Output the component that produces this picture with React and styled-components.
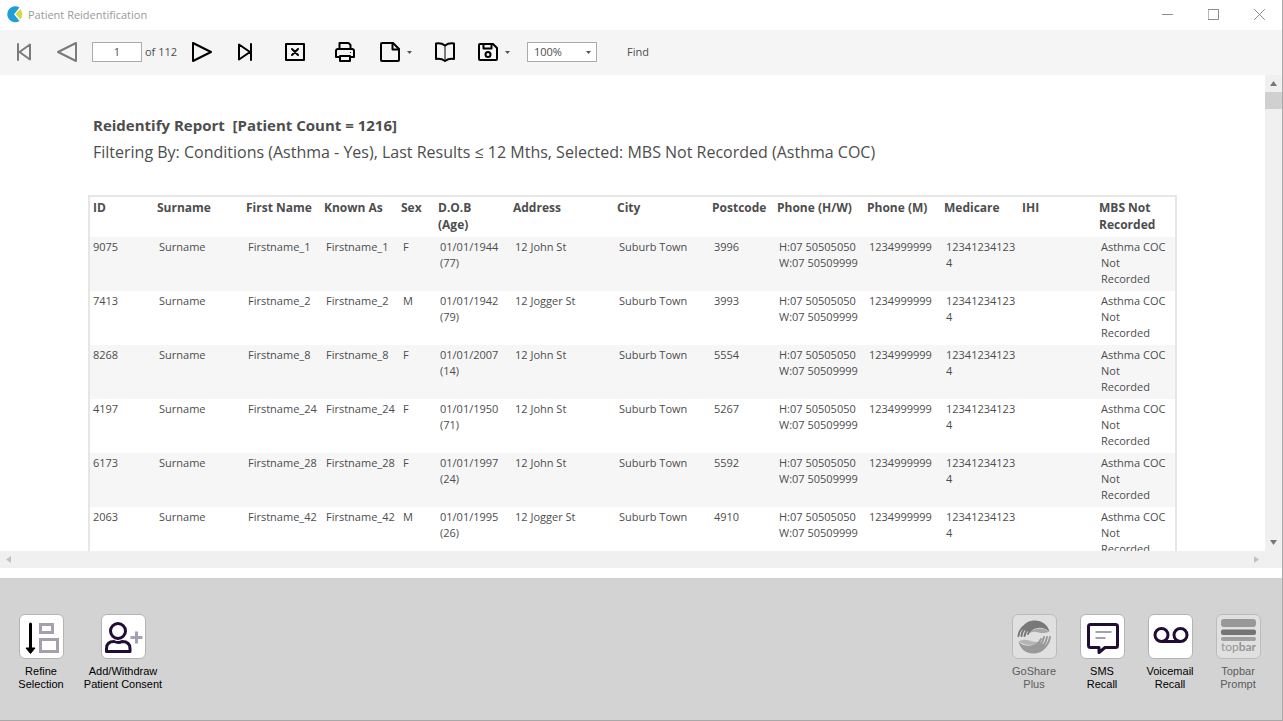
import React from 'react';
import styled, { createGlobalStyle } from 'styled-components';

const GlobalStyle = createGlobalStyle`
  * {
    box-sizing: border-box;
  }

  body {
    margin: 0;
    font-family: "Open Sans", "Noto Sans", sans-serif;
    font-size: 11px;
    color: #4d4d4d;
    background: #fff;
  }

  button,
  input,
  select {
    font: inherit;
    color: inherit;
  }
`;

const Window = styled.div`
  display: flex;
  flex-direction: column;
  height: 100vh;
  overflow: hidden;
  background: #fff;
  border-right: 1px solid #a8a8a8;
  border-bottom: 1px solid #a8a8a8;
`;

/* title bar */

const TitleBar = styled.header`
  display: flex;
  align-items: center;
  flex: none;
  height: 30px;
  padding: 0 0 2px 7px;
  color: #999;
`;

const WindowTitle = styled.h1`
  flex: 1;
  margin: 0 0 0 4px;
  font-size: 11px;
  font-weight: 400;
`;

const WindowButton = styled.button`
  display: flex;
  align-items: center;
  justify-content: center;
  width: 46px;
  height: 28px;
  padding: 0;
  border: 0;
  background: none;
  color: #8c8c8c;
`;

/* toolbar */

const Toolbar = styled.div`
  display: flex;
  align-items: center;
  flex: none;
  height: 45px;
  padding: 0 9px 1px;
  background: #f5f5f5;
`;

const ToolButton = styled.button`
  display: flex;
  align-items: center;
  justify-content: center;
  gap: 7px;
  height: 30px;
  min-width: 30px;
  margin-left: ${({ $before }) => $before || 0}px;
  padding: 0 0 0 ${({ $menu }) => ($menu ? 5 : 0)}px;
  border: 0;
  background: none;
  color: #000;

  &:disabled {
    color: #7a7a7a;
  }
`;

const PageInput = styled.input`
  width: 50px;
  height: 20px;
  margin-left: 10px;
  padding: 0 0 2px;
  border: 1px solid #ababab;
  background: #fff;
  text-align: center;
`;

const PageCount = styled.span`
  width: 42px;
  margin-left: 3px;
  padding-bottom: 2px;
  white-space: nowrap;
`;

const ZoomField = styled.div`
  position: relative;
  margin-left: 17px;

  svg {
    position: absolute;
    top: 9px;
    right: 6px;
    pointer-events: none;
  }
`;

const ZoomSelect = styled.select`
  display: block;
  appearance: none;
  width: 70px;
  height: 20px;
  padding: 0 6px 2px;
  border: 1px solid #ababab;
  border-radius: 0;
  background: #fff;
`;

const FindButton = styled.button`
  margin-left: 30px;
  padding: 0 0 2px;
  border: 0;
  background: none;
`;

/* report */

const Viewer = styled.main`
  display: grid;
  grid-template-columns: minmax(0, 1fr) 17px;
  grid-template-rows: minmax(0, 1fr) 17px;
  flex: 1;
  min-height: 0;
  margin-bottom: 10px;
`;

const Page = styled.section`
  overflow: hidden;
  padding: 38px 0 0 88px;
`;

const ReportTitle = styled.h2`
  margin: 0;
  padding-left: 5px;
  font-size: 15px;
  font-weight: 700;
  line-height: 24px;
  white-space: pre;
`;

const ReportFilter = styled.p`
  margin: 0 0 28px;
  padding-left: 5px;
  font-size: 16px;
  line-height: 30px;
  white-space: nowrap;
`;

const ReportTable = styled.table`
  width: 1089px;
  table-layout: fixed;
  border: 2px solid #e6e6e6;
  border-collapse: separate;
  border-spacing: 0;
`;

const HeadCell = styled.th`
  padding: 2px 6px 4px 3px;
  font-size: 12px;
  font-weight: 700;
  line-height: 17px;
  text-align: left;
  vertical-align: top;
`;

const Row = styled.tr`
  &:nth-child(odd) {
    background: #f6f6f6;
  }
`;

const Cell = styled.td`
  padding: 2px 2px 4px 5px;
  line-height: 16px;
  vertical-align: top;
  overflow-wrap: anywhere;

  &:first-child {
    padding-left: 3px;
  }
`;

const Line = styled.span`
  display: block;
  white-space: nowrap;
`;

const ScrollBar = styled.div`
  display: flex;
  flex-direction: ${({ $horizontal }) => ($horizontal ? 'row' : 'column')};
  grid-column: ${({ $horizontal }) => ($horizontal ? '1 / -1' : 'auto')};
  padding-right: ${({ $horizontal }) => ($horizontal ? 17 : 0)}px;
  background: #f0f0f0;
`;

const ScrollArrow = styled.button`
  display: flex;
  align-items: center;
  justify-content: center;
  width: 17px;
  height: 17px;
  padding: 0;
  border: 0;
  background: none;
  color: #777;

  &:disabled {
    color: #c2c2c2;
  }
`;

const ScrollThumb = styled.div`
  height: 17px;
  background: #d0d0d0;
`;

const ScrollTrack = styled.div`
  flex: 1;
`;

/* action bar */

const ActionBar = styled.footer`
  display: flex;
  justify-content: space-between;
  flex: none;
  padding: 36px 10px 29px 7px;
  background: #d3d3d3;
`;

const ActionGroup = styled.div`
  display: flex;
`;

const Action = styled.button`
  display: flex;
  flex-direction: column;
  align-items: center;
  gap: 6px;
  width: ${({ $wide }) => ($wide ? 96 : 68)}px;
  padding: 0;
  border: 0;
  background: none;
  font-family: "Liberation Sans", Arial, sans-serif;
  font-size: 11px;
  line-height: 13px;
  color: #000;

  &:disabled {
    color: #5c5c5c;
  }
`;

const ActionIcon = styled.span`
  display: flex;
  width: 45px;
  height: 45px;
  border: 1px solid #b4b4b4;
  border-radius: 6px;
  background: #fff;

  ${Action}:disabled & {
    background: #e0e0e0;
    border-color: #bcbcbc;
  }
`;

const Stroke = ({ children, width = 2, size = 20 }) => (
  <svg
    width={size}
    height={size}
    viewBox={`0 0 ${size} ${size}`}
    fill="none"
    stroke="currentColor"
    strokeWidth={width}
    strokeLinejoin="round"
    strokeLinecap="round"
    aria-hidden="true"
  >
    {children}
  </svg>
);

const Caret = () => (
  <svg width="5" height="3" viewBox="0 0 5 3" aria-hidden="true">
    <path d="M0 0h5L2.5 3z" fill="#555" />
  </svg>
);

const Arrow = ({ d }) => (
  <svg width="7" height="7" viewBox="0 0 7 7" aria-hidden="true">
    <path d={d} fill="currentColor" />
  </svg>
);

const Logo = () => (
  <svg width="17" height="17" viewBox="0 0 17 17" aria-hidden="true">
    <path d="M12.5 1.500A8 8 0 1 0 12.500 15L7 8.300z" fill="#1f9ed8" />
    <path d="M13.200 3A7.500 7.500 0 0 1 13.200 13.600L8.500 8.300z" fill="#d3dc3c" />
    <path d="M12.800 3L8 8.300l4.800 5.300" fill="none" stroke="#fff" strokeWidth="1" />
  </svg>
);

const columns = [
  { label: 'ID', width: 64 },
  { label: 'Surname', width: 89 },
  { label: 'First Name', width: 78 },
  { label: 'Known As', width: 77 },
  { label: 'Sex', width: 37 },
  { label: 'D.O.B (Age)', width: 75 },
  { label: 'Address', width: 104 },
  { label: 'City', width: 95 },
  { label: 'Postcode', width: 65 },
  { label: 'Phone (H/W)', width: 90 },
  { label: 'Phone (M)', width: 77 },
  { label: 'Medicare', width: 78 },
  { label: 'IHI', width: 77 },
  { label: 'MBS Not Recorded', width: 79 },
];

const patients = [
  { id: '9075', name: 'Firstname_1', sex: 'F', dob: '01/01/1944', age: 77, address: '12 John St', postcode: '3996' },
  { id: '7413', name: 'Firstname_2', sex: 'M', dob: '01/01/1942', age: 79, address: '12 Jogger St', postcode: '3993' },
  { id: '8268', name: 'Firstname_8', sex: 'F', dob: '01/01/2007', age: 14, address: '12 John St', postcode: '5554' },
  { id: '4197', name: 'Firstname_24', sex: 'F', dob: '01/01/1950', age: 71, address: '12 John St', postcode: '5267' },
  { id: '6173', name: 'Firstname_28', sex: 'F', dob: '01/01/1997', age: 24, address: '12 John St', postcode: '5592' },
  { id: '2063', name: 'Firstname_42', sex: 'M', dob: '01/01/1995', age: 26, address: '12 Jogger St', postcode: '4910' },
];

const PatientRow = ({ patient }) => (
  <Row>
    <Cell>{patient.id}</Cell>
    <Cell>Surname</Cell>
    <Cell>
      <Line>{patient.name}</Line>
    </Cell>
    <Cell>
      <Line>{patient.name}</Line>
    </Cell>
    <Cell>{patient.sex}</Cell>
    <Cell>
      <Line>{patient.dob}</Line>
      <Line>({patient.age})</Line>
    </Cell>
    <Cell>{patient.address}</Cell>
    <Cell>Suburb Town</Cell>
    <Cell>{patient.postcode}</Cell>
    <Cell>
      <Line>H:07 50505050</Line>
      <Line>W:07 50509999</Line>
    </Cell>
    <Cell>1234999999</Cell>
    <Cell>123412341234</Cell>
    <Cell />
    <Cell>
      <Line>Asthma COC</Line>
      <Line>Not</Line>
      <Line>Recorded</Line>
    </Cell>
  </Row>
);

const RefineIcon = () => (
  <svg width="43" height="43" viewBox="0 0 43 43" aria-hidden="true">
    <path d="M10.500 9v25" stroke="#000" strokeWidth="3" strokeLinecap="round" />
    <path d="M6 33h9l-4.500 5.500z" fill="#000" stroke="#000" strokeLinejoin="round" />
    <g fill="none" stroke="#a59fb0" strokeWidth="3">
      <rect x="20.500" y="9.500" width="12" height="8" />
      <rect x="20.500" y="24.500" width="17" height="12" />
    </g>
  </svg>
);

const ConsentIcon = () => (
  <svg width="43" height="43" viewBox="0 0 43 43" fill="none" aria-hidden="true">
    <g stroke="#210d33" strokeWidth="3" strokeLinejoin="round">
      <circle cx="16" cy="16" r="7.500" />
      <path d="M4.500 36.500v-3q0-7 7.500-7q4.500 2 8 0q8 0 8 7v3z" />
    </g>
    <path d="M34.500 16.500v12M28.500 22.500h12" stroke="#a59fb0" strokeWidth="3" />
  </svg>
);

const GoShareIcon = () => (
  <svg width="43" height="43" viewBox="0 0 43 43" fill="none" strokeLinecap="round" aria-hidden="true">
    <path d="M17 17c4-4 13-5 19.500-.5c-4 2-8 2-11 1c-3-1-6-1-8.500.500z" fill="#a8a8a8" />
    <path d="M8 14C11 8 16 5.500 22 5.500c7 0 12.500 4 14.500 11c-5-4-10-4.500-14-3c-3 1-4.500 2-6 3.500z" fill="#787878" />
    <g stroke="#787878" strokeWidth="2">
      <path d="M10 12Q6 16 5.500 21" />
      <path d="M13 12Q9 16 8.500 21" />
      <path d="M16 13Q12.500 16 11.500 21" />
      <path d="M19 14Q16 16 15 19" />
    </g>
    <path d="M25 27c-4 4-13 4-19.500-.5c4-2 8-2 11-1c3 1 6 1.500 8.500 1.500z" fill="#b4b4b4" />
    <path d="M34 31C31 36 26 38.500 20 38.500C13 38.500 7.500 34 5.500 27c5 4 10 4.500 14 3c3-1 4.500-2 6-3.500z" fill="#999" />
    <g stroke="#999" strokeWidth="2">
      <path d="M33 31Q36.500 27 37 22" />
      <path d="M30 31Q33.500 27 34 22" />
      <path d="M27 30Q30 27 31 22" />
      <path d="M24 29Q27 27 28 24" />
    </g>
  </svg>
);

const SmsIcon = () => (
  <svg width="43" height="43" viewBox="0 0 43 43" fill="none" aria-hidden="true">
    <path
      d="M9.500 9.500h25q2 0 2 2v19q0 2-2 2H24l-6 5v-5H9.500q-2 0-2-2v-19q0-2 2-2z"
      stroke="#210d33"
      strokeWidth="3"
      strokeLinejoin="round"
    />
    <path d="M14.500 17h16M14.500 23h10" stroke="#a59fb0" strokeWidth="2" />
  </svg>
);

const VoicemailIcon = () => (
  <svg width="43" height="43" viewBox="0 0 43 43" fill="none" stroke="#210d33" strokeWidth="3" aria-hidden="true">
    <circle cx="12.500" cy="20" r="6.500" />
    <circle cx="31.500" cy="20" r="6.500" />
    <path d="M12 26.500h20" />
  </svg>
);

const TopbarIcon = () => (
  <svg width="43" height="43" viewBox="0 0 43 43" aria-hidden="true">
    <rect x="4" y="4" width="35" height="8" rx="3" fill="#989898" />
    <rect x="4" y="14.500" width="35" height="5.500" rx="2" fill="#747474" />
    <rect x="4" y="22" width="35" height="4" rx="2" fill="#a0a0a0" />
    <text x="21.500" y="36" textAnchor="middle" fontFamily="Lato, sans-serif" fontSize="12" fill="#959595">
      top<tspan fontWeight="700">bar</tspan>
    </text>
  </svg>
);

const ActionButton = ({ icon, lines, wide, disabled }) => (
  <Action type="button" $wide={wide} disabled={disabled}>
    <ActionIcon>{icon}</ActionIcon>
    <span>
      {lines[0]}
      <br />
      {lines[1]}
    </span>
  </Action>
);

export default function App() {
  return (
    <>
      <GlobalStyle />
      <Window>
        <TitleBar>
          <Logo />
          <WindowTitle>Patient Reidentification</WindowTitle>
          <WindowButton type="button" aria-label="Minimise">
            <Stroke size={11} width={1}><path d="M.5 5.500h10" /></Stroke>
          </WindowButton>
          <WindowButton type="button" aria-label="Maximise">
            <Stroke size={11} width={1}><path d="M.5.5h10v10H.5z" /></Stroke>
          </WindowButton>
          <WindowButton type="button" aria-label="Close">
            <Stroke size={11} width={1}><path d="M.5.5l10 10M10.500.5l-10 10" /></Stroke>
          </WindowButton>
        </TitleBar>

        <Toolbar>
          <ToolButton type="button" aria-label="First page" disabled>
            <Stroke><path d="M4 2v16M16 2.500v15L5.500 10z" /></Stroke>
          </ToolButton>
          <ToolButton type="button" aria-label="Previous page" $before={13} disabled>
            <Stroke><path d="M19 1v18L1 10z" /></Stroke>
          </ToolButton>
          <PageInput aria-label="Page number" defaultValue="1" />
          <PageCount>of 112</PageCount>
          <ToolButton type="button" aria-label="Next page">
            <Stroke><path d="M1 1v18l18-9z" /></Stroke>
          </ToolButton>
          <ToolButton type="button" aria-label="Last page" $before={13}>
            <Stroke><path d="M16 2v16M4 2.500v15L15 10z" /></Stroke>
          </ToolButton>
          <ToolButton type="button" aria-label="Stop" $before={20}>
            <Stroke>
              <path d="M1 2h18v16H1z" />
              <path d="M7 7l6 6M13 7l-6 6" />
            </Stroke>
          </ToolButton>
          <ToolButton type="button" aria-label="Print" $before={20}>
            <Stroke>
              <path d="M4.500 6V1h9L15.500 3v3M5 15H1V9q0-2 2-2h14q2 0 2 2v6h-4" />
              <path d="M5 14h10v5H5z" />
              <path d="M15.500 10.500h.1" strokeWidth="1" />
            </Stroke>
          </ToolButton>
          <ToolButton type="button" aria-label="Page setup" $before={15} $menu>
            <Stroke>
              <path d="M2 1h11l6 6v11q0 1-1 1H2q-1 0-1-1V2q0-1 1-1z" />
              <path d="M12.500 1v6.500H19" />
            </Stroke>
            <Caret />
          </ToolButton>
          <ToolButton type="button" aria-label="Print layout" $before={18}>
            <Stroke>
              <path d="M1 1.500q5-1 9 2q4-3 9-2v15.500q-5-1-9 2q-4-3-9-2z" />
              <path d="M10 4v14" strokeWidth="1" />
            </Stroke>
          </ToolButton>
          <ToolButton type="button" aria-label="Export" $before={13} $menu>
            <Stroke>
              <path d="M2 2h13l4 4v11q0 1-1 1H2q-1 0-1-1V3q0-1 1-1z" />
              <path d="M5.500 2v4.500h8V2" />
              <circle cx="10" cy="12.500" r="2.500" />
            </Stroke>
            <Caret />
          </ToolButton>
          <ZoomField>
            <ZoomSelect aria-label="Zoom" defaultValue="100%">
              <option>100%</option>
            </ZoomSelect>
            <Caret />
          </ZoomField>
          <FindButton type="button">Find</FindButton>
        </Toolbar>

        <Viewer>
          <Page>
            <ReportTitle>{'Reidentify Report  [Patient Count = 1216]'}</ReportTitle>
            <ReportFilter>
              Filtering By: Conditions (Asthma - Yes), Last Results ≤ 12 Mths, Selected: MBS Not Recorded (Asthma COC)
            </ReportFilter>
            <ReportTable>
              <colgroup>
                {columns.map(({ label, width }) => (
                  <col key={label} width={width} />
                ))}
              </colgroup>
              <thead>
                <tr>
                  {columns.map(({ label }) => (
                    <HeadCell key={label} scope="col">{label}</HeadCell>
                  ))}
                </tr>
              </thead>
              <tbody>
                {patients.map((patient) => (
                  <PatientRow key={patient.id} patient={patient} />
                ))}
              </tbody>
            </ReportTable>
          </Page>
          <ScrollBar>
            <ScrollArrow type="button" aria-label="Scroll up"><Arrow d="M0 6h7L3.500 1z" /></ScrollArrow>
            <ScrollThumb />
            <ScrollTrack />
            <ScrollArrow type="button" aria-label="Scroll down"><Arrow d="M0 1h7L3.500 6z" /></ScrollArrow>
          </ScrollBar>
          <ScrollBar $horizontal>
            <ScrollArrow type="button" aria-label="Scroll left" disabled><Arrow d="M6 0v7L1 3.500z" /></ScrollArrow>
            <ScrollTrack />
            <ScrollArrow type="button" aria-label="Scroll right" disabled><Arrow d="M1 0v7l5-3.500z" /></ScrollArrow>
          </ScrollBar>
        </Viewer>

        <ActionBar>
          <ActionGroup>
            <ActionButton icon={<RefineIcon />} lines={['Refine', 'Selection']} />
            <ActionButton icon={<ConsentIcon />} lines={['Add/Withdraw', 'Patient Consent']} wide />
          </ActionGroup>
          <ActionGroup>
            <ActionButton icon={<GoShareIcon />} lines={['GoShare', 'Plus']} disabled />
            <ActionButton icon={<SmsIcon />} lines={['SMS', 'Recall']} />
            <ActionButton icon={<VoicemailIcon />} lines={['Voicemail', 'Recall']} />
            <ActionButton icon={<TopbarIcon />} lines={['Topbar', 'Prompt']} disabled />
          </ActionGroup>
        </ActionBar>
      </Window>
    </>
  );
}
